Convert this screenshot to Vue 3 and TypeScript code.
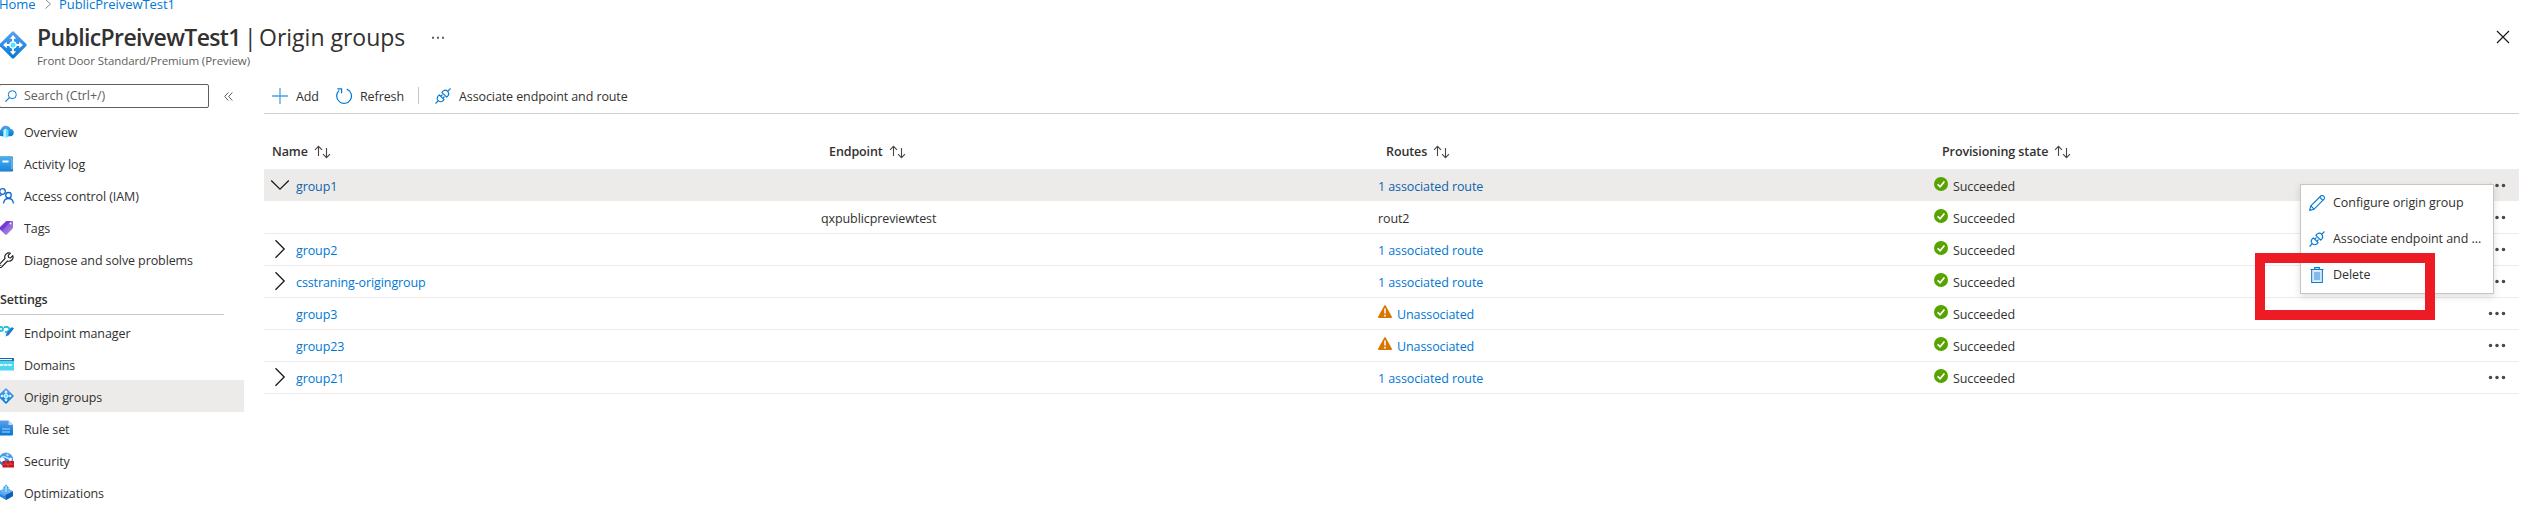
<script setup lang="ts">
interface NavItem { label: string; icon: string; active?: boolean }
interface Row {
  name: string
  endpoint?: string
  route: string
  chevron?: 'down' | 'right'
  warn?: boolean
  child?: boolean
  selected?: boolean
}

const general: NavItem[] = [
  { label: 'Overview', icon: 'cloud' },
  { label: 'Activity log', icon: 'log' },
  { label: 'Access control (IAM)', icon: 'people' },
  { label: 'Tags', icon: 'tag' },
  { label: 'Diagnose and solve problems', icon: 'wrench' },
]
const settings: NavItem[] = [
  { label: 'Endpoint manager', icon: 'endpoint' },
  { label: 'Domains', icon: 'domains' },
  { label: 'Origin groups', icon: 'origin', active: true },
  { label: 'Rule set', icon: 'rules' },
  { label: 'Security', icon: 'security' },
  { label: 'Optimizations', icon: 'optimize' },
]
const columns: string[] = ['Name', 'Endpoint', 'Routes', 'Provisioning state']
const rows: Row[] = [
  { name: 'group1', route: '1 associated route', chevron: 'down', selected: true },
  { name: '', endpoint: 'qxpublicpreviewtest', route: 'rout2', child: true },
  { name: 'group2', route: '1 associated route', chevron: 'right' },
  { name: 'csstraning-origingroup', route: '1 associated route', chevron: 'right' },
  { name: 'group3', route: 'Unassociated', warn: true },
  { name: 'group23', route: 'Unassociated', warn: true },
  { name: 'group21', route: '1 associated route', chevron: 'right' },
]
const menu: NavItem[] = [
  { label: 'Configure origin group', icon: 'pencil' },
  { label: 'Associate endpoint and ...', icon: 'plug' },
  { label: 'Delete', icon: 'trash' },
]
</script>

<template>
  <div class="page">
    <svg class="defs" aria-hidden="true">
      <defs>
        <linearGradient id="blue" x1="0" y1="0" x2="0" y2="1">
          <stop offset="0" stop-color="#5ea0ef" /><stop offset="1" stop-color="#0078d4" />
        </linearGradient>
        <linearGradient id="sky" x1="0" y1="0" x2="0" y2="1">
          <stop offset="0" stop-color="#4bb0ee" /><stop offset="1" stop-color="#1c84dc" />
        </linearGradient>
        <linearGradient id="violet" x1="0" y1="0" x2="1" y2="1">
          <stop offset="0" stop-color="#6b2fd0" /><stop offset="1" stop-color="#b795e4" />
        </linearGradient>
      </defs>
      <symbol id="origin" viewBox="0 0 28 28">
        <path d="M13 .7 Q14 -.2 15 .7 L27.300 13 Q28.200 14 27.300 15 L15 27.300 Q14 28.200 13 27.300 L.7 15 Q-.2 14 .7 13Z" fill="url(#blue)" />
        <path d="M14 6v16M6 14h16" stroke="#fff" stroke-width="1.800" />
        <g fill="#fff">
          <path d="M10.800 7.800 14 4l3.200 3.800zM10.800 20.200 14 24l3.200-3.800zM7.800 10.800 4 14l3.800 3.200zM20.200 10.800 24 14l-3.800 3.200z" />
          <circle cx="14" cy="14" r="3.800" />
        </g>
        <circle cx="14" cy="14" r="2.500" fill="#50e6ff" />
      </symbol>
      <symbol id="cloud" viewBox="0 0 16 16">
        <path d="M3.500 12.300A3.500 3.500 0 0 1 3 5.500 5 5 0 0 1 12.500 5a3.700 3.700 0 0 1 .3 7.300Z" fill="url(#blue)" />
        <path d="M5.500 6.500Q8 3 10.500 6.500V12Q8 15 5.500 12Z" fill="#50e6ff" /><path d="M5.500 6.500Q7 4.500 8 4.500V14Q6.500 13.500 5.500 12Z" fill="#c3f1ff" />
      </symbol>
      <symbol id="log" viewBox="0 0 16 16">
        <rect x="1" y=".5" width="14" height="15" rx="1" fill="#1565b3" />
        <rect x="1" y=".5" width="12.500" height="14.500" rx="1" fill="url(#sky)" />
        <rect x="13.500" y="1.500" width="1" height="12" fill="#9cebff" />
        <rect x="4.500" y="4.500" width="6" height="2" fill="#fff" />
      </symbol>
      <symbol id="people" viewBox="0 0 16 16">
        <g fill="none" stroke="#1068d0" stroke-width="1.300">
          <circle cx="4.500" cy="3.500" r="2.800" /><circle cx="10.500" cy="7.300" r="2.800" />
          <path d="M.5 11Q1 7 4 6.800M5.500 15.500Q6 10.500 10.500 10.500T15.400 15.500" />
        </g>
      </symbol>
      <symbol id="tag" viewBox="0 0 16 16">
        <path d="M9 1h5q1 0 1 1v5.500q0 .7-.5 1.200L8.800 14.600q-.8.8-1.600 0L1.400 9q-.7-.7 0-1.500L7.800 1.500Q8.300 1 9 1Z" fill="url(#violet)" />
        <path d="M8 1.500 1.400 8 4 10.500 13 1Z" fill="#6a2fd1" opacity=".7" /><circle cx="12.500" cy="3.600" r="1" fill="#fff" />
      </symbol>
      <symbol id="wrench" viewBox="0 0 16 16">
        <path d="M14.800 3.600 12.600 5.800 10.600 5.500 10.200 3.400 12.400 1.200A4.200 4.200 0 0 0 7 6.500L1.100 12.700A1.700 1.700 0 0 0 3.500 15.100L9.500 9A4.200 4.200 0 0 0 14.800 3.600Z" fill="none" stroke="#252423" stroke-width="1.200" stroke-linejoin="round" />
        <circle cx="2.800" cy="13.400" r=".6" fill="#252423" />
      </symbol>
      <symbol id="endpoint" viewBox="0 0 16 16">
        <g fill="none" stroke="#32bedd" stroke-width="2"><circle cx="3" cy="5" r="2" /><path d="M6 3h3.500l2.500 2-2.500 3H7" /></g>
        <path d="m7.500 12.500 1-3L14 3l2 1.600-5.500 6.600Z" fill="#1b78d0" />
      </symbol>
      <symbol id="domains" viewBox="0 0 16 16">
        <rect x="0" y="2" width="16" height="12.500" rx=".6" fill="#50d5ee" />
        <path d="M0 5V2.600Q0 2 .6 2h14.800q.6 0 .6.6V5Z" fill="#1468b5" /><rect x="1.500" y="3" width="12.500" height="1.200" fill="#e8f6ff" />
        <path d="m2 8 .8 2 .8-2 .8 2 .8-2M6.200 8l.8 2 .8-2 .8 2 .8-2M10.400 8l.8 2 .8-2 .8 2 .8-2" fill="none" stroke="#fff" stroke-width=".9" />
      </symbol>
      <symbol id="rules" viewBox="0 0 16 16">
        <path d="M1 1.400Q1 .5 2 .5h8.500L15 5v9.500q0 1-1 1H2q-1 0-1-1Z" fill="url(#blue)" /><path d="M10.500.5V5H15Z" fill="#b5d8fa" />
        <path d="M4 9h8M4 12h8" stroke="#a8d5fb" stroke-width="1.200" />
      </symbol>
      <symbol id="security" viewBox="0 0 16 16">
        <circle cx="8" cy="7.500" r="7" fill="url(#blue)" />
        <path d="M2 8.500Q3 4 7 5t6 4" stroke="#b9e4ff" stroke-width="1.600" fill="none" />
        <circle cx="4.500" cy="8" r="2.300" fill="#fff" /><circle cx="9.500" cy="3" r="1.300" fill="#9ce3ff" /><circle cx="12.500" cy="7" r="1.500" fill="#fff" />
        <rect x="4.500" y="9" width="11.500" height="6.500" fill="#c5161d" />
        <path d="M4.500 12.200H16M8 9v3M12 9v3M10 12v3.500" stroke="#e8686c" stroke-width=".6" />
      </symbol>
      <symbol id="optimize" viewBox="0 0 16 16">
        <path d="M8 4 15 7.200V12L8 16 1 12V7.200Z" fill="#2a86dd" /><path d="M8 10.500 15 7.200V12L8 16Z" fill="#0f5fb4" />
        <path d="M1 7.200 8 4l7 3.200-7 3.300Z" fill="#6fb6f4" /><path d="m8 .5 3.500 4H9.300v4H6.700v-4H4.500Z" fill="#3aa0e8" />
        <path d="M8 2v6" stroke="#a8efff" stroke-width="1.500" /><path d="M.3 8.800 2 6.500 8 10 6.500 12Z" fill="#5ba7f0" />
      </symbol>
      <symbol id="plug" viewBox="0 0 16 16">
        <g fill="none" stroke="#0078d4" stroke-width="1.100" stroke-linejoin="round">
          <path d="M.5 15.500 3.300 12.700M12.700 3.300 15.500.5" />
          <path d="M4.300 6.900 9.100 11.700 7.700 13.100Q5.300 14.500 3.300 12.700T2.900 8.300Z" />
          <path d="M6.900 4.300 11.700 9.100 13.100 7.700Q14.500 5.300 12.700 3.300T8.300 2.900Z" />
          <path d="M5.700 8.300 7.500 6.500M7.700 10.300 9.500 8.500" />
        </g>
      </symbol>
      <symbol id="pencil" viewBox="0 0 16 16">
        <g fill="none" stroke="#0078d4" stroke-width="1.100" stroke-linejoin="round">
          <path d="M.6 15.400 1.800 10.900 11.800 1Q13.300-.1 14.700 1.300T15 4.200L5.100 14.200Z" /><path d="M10.700 2.100 13.900 5.300M1.800 10.900 5.100 14.200" />
        </g>
      </symbol>
      <symbol id="trash" viewBox="0 0 16 16">
        <path d="M1.500 2.500h13M5.700 2.500V.6h4.600v1.900M2.700 2.500v13h10.600v-13" fill="none" stroke="#0078d4" stroke-width="1.100" />
        <rect x="5" y="5" width="6" height="8" fill="#83b9eb" /><rect x="3.600" y="3.500" width="8.800" height="11" fill="#83b9eb" opacity=".35" />
      </symbol>
      <symbol id="sort" viewBox="0 0 17 14">
        <path d="M4.500 11V1.500M1 4.800 4.500 1.300 8 4.800M12.500 3v9.500M9 9.200l3.500 3.500L16 9.200" fill="none" stroke="#484644" stroke-width="1.100" />
      </symbol>
      <symbol id="more" viewBox="0 0 18 5">
        <g fill="#4a4846"><circle cx="2.500" cy="2.500" r="1.750" /><circle cx="9" cy="2.500" r="1.750" /><circle cx="15.500" cy="2.500" r="1.750" /></g>
      </symbol>
      <symbol id="right" viewBox="0 0 20 20"><path d="M5.500 1.200 14.200 10 5.500 18.800" fill="none" stroke="#1b1a19" stroke-width="1.300" /></symbol>
      <symbol id="down" viewBox="0 0 20 20"><path d="M1.200 5.500 10 14.200 18.800 5.500" fill="none" stroke="#1b1a19" stroke-width="1.300" /></symbol>
    </svg>

    <header class="top">
      <nav class="crumbs">
        <a class="c-home">Home</a>
        <svg class="c-sep" viewBox="0 0 8 10"><path d="M1.500.5 6.500 5l-5 4.500" fill="none" stroke="#8a8886" /></svg>
        <a class="c-name">PublicPreivewTest1</a>
      </nav>
      <div class="heading">
        <svg class="logo"><use href="#origin" /></svg>
        <div class="titles">
          <h1><span class="strong">PublicPreivewTest1</span><span class="bar">|</span><span class="light">Origin groups</span>
            <svg class="title-more" viewBox="0 0 13 3"><path d="M0 .7h2v2H0zM5 .7h2v2H5zM10 .7h2v2h-2z" fill="#605e5c" /></svg>
          </h1>
          <p class="subtitle">Front Door Standard/Premium (Preview)</p>
        </div>
        <svg class="close" viewBox="0 0 14 14"><path d="m1 1 12 12M13 1 1 13" stroke="#1b1a19" stroke-width="1.200" /></svg>
      </div>
    </header>

    <div class="body">
      <aside class="side">
        <div class="search-line">
          <div class="search">
            <svg class="mag" viewBox="0 0 12 12"><circle cx="7.300" cy="4.700" r="4" fill="none" stroke="#0078d4" /><path d="M4.400 7.600.4 11.600" stroke="#0078d4" stroke-width="1.200" /></svg>
            <span>Search (Ctrl+/)</span>
          </div>
          <svg class="collapse" viewBox="0 0 9 9"><path d="M4.300.5.7 4.500l3.600 4M8.300.5 4.700 4.500l3.600 4" fill="none" stroke="#605e5c" /></svg>
        </div>
        <ul class="nav">
          <li v-for="n in general" :key="n.label"><svg class="ni"><use :href="'#' + n.icon" /></svg><span>{{ n.label }}</span></li>
        </ul>
        <h2 class="group">Settings</h2>
        <ul class="nav lower">
          <li v-for="n in settings" :key="n.label" :class="{ active: n.active }"><svg class="ni"><use :href="'#' + n.icon" /></svg><span>{{ n.label }}</span></li>
        </ul>
      </aside>

      <main class="main">
        <div class="toolbar">
          <svg class="ti" viewBox="0 0 16 16"><path d="M8 0v16M0 8h16" stroke="#4da3e4" stroke-width="1.300" /></svg>
          <span class="t-add">Add</span>
          <svg class="ti" viewBox="0 0 16 16"><path d="M10.800 1.100A7.400 7.400 0 1 1 3.200 2.400M1.300.9H5.600V5.200" fill="none" stroke="#0078d4" stroke-width="1.200" /></svg>
          <span class="t-refresh">Refresh</span>
          <i class="divider"></i>
          <svg class="ti"><use href="#plug" /></svg>
          <span class="t-assoc">Associate endpoint and route</span>
        </div>

        <div class="grid head">
          <div v-for="c in columns" :key="c" class="th"><span>{{ c }}</span><svg class="sort"><use href="#sort" /></svg></div>
        </div>
        <div class="list">
          <div v-for="(r, i) in rows" :key="i" class="grid row" :class="{ selected: r.selected, child: r.child }">
            <div class="cell name">
              <span class="exp"><svg v-if="r.chevron"><use :href="'#' + r.chevron" /></svg></span>
              <a>{{ r.name }}</a>
            </div>
            <div class="cell ep">{{ r.endpoint }}</div>
            <div class="cell rt">
              <svg v-if="r.warn" class="status warn" viewBox="0 0 14 13"><path d="M6.200.7q.8-1.200 1.600 0L13.800 11.500q.5 1.400-.8 1.400H1q-1.300 0-.8-1.400Z" fill="#db7500" /><path d="M7 3.500v5M7 9.700v1.700" stroke="#fff" stroke-width="1.600" /></svg>
              <span v-if="r.child">{{ r.route }}</span><a v-else>{{ r.route }}</a>
            </div>
            <div class="cell">
              <svg class="status" viewBox="0 0 14 14"><circle cx="7" cy="7" r="7" fill="#57a300" /><path d="m3.600 7.300 2.500 2.500 4.300-5.300" fill="none" stroke="#fff" stroke-width="1.700" /></svg>
              <span class="ok">Succeeded</span>
            </div>
            <svg class="more"><use href="#more" /></svg>
          </div>
        </div>
      </main>
    </div>

    <div class="menu">
      <div v-for="m in menu" :key="m.label" class="mi"><svg class="ti"><use :href="'#' + m.icon" /></svg><span>{{ m.label }}</span></div>
    </div>
    <div class="marker"></div>
  </div>
</template>

<style>
html, body { background: #fff; }
</style>

<style scoped>
.page { position: relative; width: 2539px; height: 507px; overflow: hidden; font: 12.5px/18px "Open Sans", "Noto Sans", sans-serif; letter-spacing: -0.1px; color: #323130; white-space: nowrap; }
.defs { position: absolute; width: 0; height: 0; }
svg { display: block; flex: none; }
a { color: #0078d4; }
.top { display: flow-root; height: 76px; }
.crumbs { display: flex; align-items: center; height: 18px; margin-top: -5px; font-size: 13px; letter-spacing: -0.05px; }
.c-home { width: 45px; margin-left: -1px; }
.c-sep { width: 8px; height: 10px; margin-right: 7px; }
.heading { display: flex; height: 63px; align-items: flex-start; }
.logo { width: 28px; height: 28px; margin: 18px 0 0 -1px; }
.titles { margin-left: 10px; margin-top: 7px; flex: 1; }
h1 { display: flex; align-items: center; margin: 0; height: 34px; font-size: 23px; line-height: 34px; font-weight: 400; letter-spacing: 0; }
.strong { width: 207px; font-weight: 600; letter-spacing: -0.62px; }
.bar { width: 15px; }
.light { width: 173px; }
.title-more { width: 13px; height: 3px; }
.subtitle { margin: -1px 0 0; font-size: 11.5px; line-height: 16px; letter-spacing: -0.08px; color: #605e5c; }
.close { width: 14px; height: 14px; margin: 17px 29px 0 0; }
.body { display: flex; height: 431px; }
.side { width: 264px; }
.search-line { display: flex; align-items: center; height: 40px; }
.search { display: flex; align-items: center; box-sizing: border-box; width: 210px; height: 24px; margin-left: -1px; padding-left: 5px; border: 1px solid #605e5c; border-radius: 2px; color: #605e5c; }
.mag { width: 12px; height: 12px; margin-right: 7px; }
.collapse { width: 9px; height: 9px; margin-left: 15px; }
.nav { list-style: none; margin: 0; padding: 0; }
.nav li { display: flex; align-items: center; width: 244px; height: 32px; }
.nav li.active { background: #edebe9; }
.nav span { padding-top: 2px; }
.nav.lower span { padding-top: 4px; }
.ni { width: 16px; height: 16px; margin: 0 10px 0 -2px; }
.group { width: 224px; height: 39px; margin: 0 0 1px; box-sizing: border-box; padding-top: 15px; border-bottom: 1px solid #c8c6c4; font-size: 12.5px; line-height: 18px; font-weight: 600; }
.main { width: 2255px; }
.toolbar { display: flex; align-items: center; padding: 2px 0 0 8px; box-sizing: border-box; height: 38px; border-bottom: 1px solid #d2d0ce; }
.toolbar span { padding-top: 2px; }
.ti { width: 16px; height: 16px; }
.t-add { width: 40px; margin-left: 8px; }
.t-refresh { width: 58px; margin-left: 8px; }
.divider { width: 1px; height: 17px; margin-right: 16px; background: #c8c6c4; }
.t-assoc { margin-left: 8px; }
.grid { display: grid; grid-template-columns: 557px 557px 556px 540px 45px; }
.head { height: 55px; padding-top: 29px; box-sizing: border-box; font-weight: 600; }
.th { display: flex; height: 18px; padding-left: 8px; }
.sort { width: 17px; height: 14px; margin: 2px 0 0 6px; }
.row { height: 32px; box-sizing: border-box; border-top: 1px solid #edebe9; }
.row.selected { background: #edebe9; }
.selected a { color: #0f62ad; }
.row.child { border-top-color: transparent; }
.list { border-bottom: 1px solid #edebe9; }
.cell { display: flex; height: 31px; align-items: flex-start; line-height: 18px; padding-top: 8px; box-sizing: border-box; }
.exp { width: 20px; height: 20px; margin: -3px 5px 0 6px; }
.exp svg { width: 20px; height: 20px; }
.name a { margin-left: 1px; }
.status { width: 14px; height: 14px; margin: -1px 5px 0 0; }
.warn { height: 13px; }
.more { width: 18px; height: 5px; margin: 13px 0 0 14px; }
.menu { position: absolute; left: 2300px; top: 184px; width: 194px; height: 110px; box-sizing: border-box; border: 1px solid #c8c6c4; background: #fff; box-shadow: 0 3px 7px rgba(0, 0, 0, .13); }
.mi { display: flex; align-items: center; height: 36px; padding-left: 8px; letter-spacing: -0.05px; }
.mi span { margin-left: 8px; }
.marker { position: absolute; left: 2255px; top: 253px; width: 180px; height: 67px; box-sizing: border-box; border: 10px solid #ed1c24; }
</style>
